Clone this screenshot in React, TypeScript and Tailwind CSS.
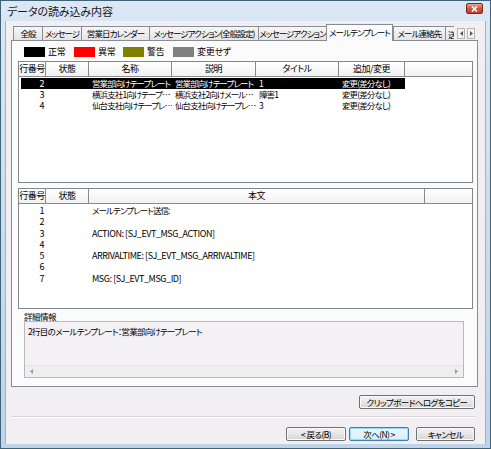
import React from "react";

const FONT = "font-['Noto_Sans_CJK_JP',sans-serif] [font-feature-settings:'palt']";

function Tab({ label, w, selected }: { label: string; w: number; selected?: boolean }) {
  if (selected) {
    return (
      <div
        className="relative z-10 h-[17px] shrink-0 border border-b-0 border-[#898c95] bg-[#fbfbfc] flex items-center justify-center whitespace-nowrap overflow-hidden text-[8.5px] tracking-[-0.9px] text-black pb-[2px]"
        style={{ width: w }}
      >
        {label}
      </div>
    );
  }
  return (
    <div
      className="h-[14px] mb-[1px] shrink-0 border-t border-l border-[#898c95] bg-gradient-to-b from-[#f7f7f7] to-[#e4e4e6] flex items-center justify-center whitespace-nowrap overflow-hidden text-[8.5px] tracking-[-0.9px] text-black"
      style={{ width: w }}
    >
      {label}
    </div>
  );
}

function HeaderCell({ label, w, last }: { label: string; w: number; last?: boolean }) {
  return (
    <div
      className={
        "h-full shrink-0 flex items-center justify-center text-[9px] tracking-[-0.5px] whitespace-nowrap overflow-hidden " +
        (last ? "" : "border-r border-[#8a8a8a]")
      }
      style={{ width: w }}
    >
      {label}
    </div>
  );
}

const upperCols = [27, 43, 83, 84, 83, 66, 67];
const lowerCols = [27, 43, 336, 47];

const upperRows = [
  { n: "2", name: "営業部向けテープレート", desc: "営業部向けテープレート", title: "1", mod: "変更(差分なし)", sel: true },
  { n: "3", name: "横浜支社1向けテープ…", desc: "横浜支社2向けメール…", title: "障害1", mod: "変更(差分なし)" },
  { n: "4", name: "仙台支社向けテープレ…", desc: "仙台支社向けテープレ…", title: "3", mod: "変更(差分なし)" },
];

const lowerRows = [
  { n: "1", t: "メールテンプレート送信:", jp: true },
  { n: "2", t: "" },
  { n: "3", t: "ACTION: [SJ_EVT_MSG_ACTION]" },
  { n: "4", t: "" },
  { n: "5", t: "ARRIVALTIME: [SJ_EVT_MSG_ARRIVALTIME]" },
  { n: "6", t: "" },
  { n: "7", t: "MSG: [SJ_EVT_MSG_ID]" },
];

function Btn({ label, w, def }: { label: string; w: number; def?: boolean }) {
  return (
    <div
      className={
        "h-[14px] shrink-0 rounded-[2px] border flex items-center justify-center text-[8.5px] tracking-[-0.6px] whitespace-nowrap " +
        (def
          ? "border-[#3c7fb1] bg-gradient-to-b from-[#eaf6fd] to-[#d9f0fc] shadow-[inset_0_0_0_1px_#9ed8f7]"
          : "border-[#707070] bg-gradient-to-b from-[#f2f2f2] via-[#e6e6e6] to-[#d4d4d4] shadow-[inset_0_0_0_1px_#fcfcfc]")
      }
      style={{ width: w }}
    >
      {label}
    </div>
  );
}

function LegendItem({ color, label, gap }: { color: string; label: string; gap: number }) {
  return (
    <div className="flex items-center shrink-0" style={{ width: gap }}>
      <div className="w-[21px] h-[10px] shrink-0" style={{ background: color }} />
      <span className="ml-[3px] text-[9px] tracking-[-0.3px] leading-[10px]">{label}</span>
    </div>
  );
}

const JP = "text-[8.5px] tracking-[-0.9px]";
const LAT = "text-[9px] tracking-[-0.45px]";

export default function App() {
  return (
    <div
      className={
        FONT +
        " w-[491px] h-[449px] border border-[#3f6478] bg-gradient-to-b from-[#dbe7f4] via-[#cddcee] to-[#bfd3ea] flex flex-col overflow-hidden text-black"
      }
    >
      {/* title bar */}
      <div className="h-[20px] shrink-0 flex items-center pl-[6px] pr-[7px]">
        <span className="text-[11px] tracking-[-0.1px] text-[#1a1a1a] leading-none">データの読み込み内容</span>
        <div className="ml-auto mt-[-5px] w-[17px] h-[11px] rounded-[2px] border border-[#7a2a22] bg-gradient-to-b from-[#e8a593] via-[#d0553f] to-[#c4402b] flex items-center justify-center">
          <svg width="7" height="6" viewBox="0 0 7 6">
            <path d="M1 0.5 L6 5.5 M6 0.5 L1 5.5" stroke="#ffffff" strokeWidth="1.6" />
          </svg>
        </div>
      </div>

      {/* content */}
      <div className="mx-[4px] mb-[4px] flex-1 bg-[#f1eff2] border-l border-r border-[#9fb2c8] flex flex-col pt-[3px] pb-[3px]">
        {/* tab strip */}
        <div className="relative z-10 h-[17px] -mb-px flex items-end ml-[7px]">
          <Tab label="全般" w={29} />
          <Tab label="メッセージ" w={39} />
          <Tab label="営業日カレンダー" w={68} />
          <Tab label="メッセージアクション(全般設定)" w={109} />
          <Tab label="メッセージアクション" w={68} />
          <Tab label="メールテンプレート" w={67} selected />
          <Tab label="メール連絡先" w={52} />
          <div className="h-[14px] mb-[1px] w-[9px] shrink-0 border-t border-l border-[#898c95] bg-gradient-to-b from-[#f7f7f7] to-[#e4e4e6] overflow-hidden text-[8.5px] leading-[14px] pl-[2px] whitespace-nowrap">
            送
          </div>
          <div className="flex ml-[3px] mb-[2px] gap-[2px]">
            <div className="w-[8px] h-[11px] border border-[#b5b5b5] bg-[#f4f4f4] flex items-center justify-center">
              <svg width="3" height="5" viewBox="0 0 3 5">
                <path d="M3 0 L0 2.5 L3 5 Z" fill="#555" />
              </svg>
            </div>
            <div className="w-[8px] h-[11px] border border-[#b5b5b5] bg-[#f4f4f4] flex items-center justify-center">
              <svg width="3" height="5" viewBox="0 0 3 5">
                <path d="M0 0 L3 2.5 L0 5 Z" fill="#555" />
              </svg>
            </div>
          </div>
        </div>

        {/* panel */}
        <div className="ml-[5px] w-[467px] h-[347px] shrink-0 border border-[#898c95] bg-[#fbfbfc] flex flex-col">
          {/* legend */}
          <div className="mt-[6px] ml-[12px] h-[10px] flex items-center">
            <LegendItem color="#000000" label="正常" gap={50} />
            <LegendItem color="#ff0000" label="異常" gap={49} />
            <LegendItem color="#808000" label="警告" gap={50} />
            <LegendItem color="#808080" label="変更せず" gap={60} />
          </div>

          {/* upper table */}
          <div className="mt-[4px] ml-[6px] w-[455px] h-[122px] shrink-0 border border-[#828790] bg-white flex flex-col">
            <div className="h-[15px] shrink-0 flex border-b border-[#8a8a8a] bg-gradient-to-b from-[#ffffff] to-[#f1f1f3]">
              <HeaderCell label="行番号" w={upperCols[0]} />
              <HeaderCell label="状態" w={upperCols[1]} />
              <HeaderCell label="名称" w={upperCols[2]} />
              <HeaderCell label="説明" w={upperCols[3]} />
              <HeaderCell label="タイトル" w={upperCols[4]} />
              <HeaderCell label="追加/変更" w={upperCols[5]} />
              <HeaderCell label="" w={upperCols[6] - 2} last />
            </div>
            <div className="mt-[1px] flex flex-col">
              {upperRows.map((r) => (
                <div key={r.n} className="h-[11px] flex leading-[11px]">
                  <div
                    className={"flex ml-[2px] " + (r.sel ? "bg-black text-white" : "")}
                    style={{ width: 384 }}
                  >
                    <div className={LAT + " shrink-0 text-right pr-[2px]"} style={{ width: upperCols[0] - 2 }}>
                      {r.n}
                    </div>
                    <div className="shrink-0" style={{ width: upperCols[1] }} />
                    <div className={JP + " shrink-0 pl-[3px] whitespace-nowrap overflow-hidden"} style={{ width: upperCols[2] }}>
                      {r.name}
                    </div>
                    <div className={JP + " shrink-0 pl-[3px] whitespace-nowrap overflow-hidden"} style={{ width: upperCols[3] }}>
                      {r.desc}
                    </div>
                    <div className={JP + " shrink-0 pl-[3px] whitespace-nowrap overflow-hidden"} style={{ width: upperCols[4] }}>
                      {r.title}
                    </div>
                    <div className={JP + " shrink-0 pl-[3px] whitespace-nowrap overflow-hidden"} style={{ width: upperCols[5] - 1 }}>
                      {r.mod}
                    </div>
                  </div>
                </div>
              ))}
            </div>
          </div>

          {/* lower table */}
          <div className="mt-[5px] ml-[6px] w-[455px] h-[121px] shrink-0 border border-[#828790] bg-white flex flex-col">
            <div className="h-[15px] shrink-0 flex border-b border-[#8a8a8a] bg-gradient-to-b from-[#ffffff] to-[#f1f1f3]">
              <HeaderCell label="行番号" w={lowerCols[0]} />
              <HeaderCell label="状態" w={lowerCols[1]} />
              <HeaderCell label="本文" w={lowerCols[2]} />
              <HeaderCell label="" w={lowerCols[3] - 2} last />
            </div>
            <div className="mt-[1px] flex flex-col">
              {lowerRows.map((r) => (
                <div key={r.n} className="h-[11.3px] flex leading-[11px]">
                  <div className={LAT + " shrink-0 text-right pr-[2px]"} style={{ width: lowerCols[0] }}>
                    {r.n}
                  </div>
                  <div className="shrink-0" style={{ width: lowerCols[1] }} />
                  <div
                    className={(r.jp ? JP : LAT) + " shrink-0 pl-[3px] whitespace-nowrap overflow-hidden"}
                    style={{ width: lowerCols[2] }}
                  >
                    {r.t}
                  </div>
                </div>
              ))}
            </div>
          </div>

          {/* details */}
          <div className="mt-[2px] ml-[12px] h-[10px] text-[8.5px] leading-[10px] tracking-[-0.5px]">詳細情報</div>
          <div className="ml-[12px] w-[440px] h-[57px] shrink-0 border border-[#b7b9bf] bg-[#f3f1f4] flex flex-col">
            <div className="flex-1 pl-[3px] pt-[4px] text-[8.5px] leading-[11px] tracking-[-0.7px]">
              2行目のメールテンプレート：営業部向けテープレート
            </div>
            <div className="h-[12px] shrink-0 flex items-center justify-between px-[5px] bg-[#eeedf0] border-t border-[#e6e4e8]">
              <svg width="3" height="5" viewBox="0 0 3 5">
                <path d="M3 0 L0 2.5 L3 5 Z" fill="#9a9a9a" />
              </svg>
              <svg width="3" height="5" viewBox="0 0 3 5">
                <path d="M0 0 L3 2.5 L0 5 Z" fill="#9a9a9a" />
              </svg>
            </div>
          </div>
        </div>

        {/* clipboard button */}
        <div className="mt-[8px] flex justify-end pr-[10px]">
          <Btn label="クリップボードへログをコピー" w={116} />
        </div>

        {/* separator */}
        <div className="mt-[7px] ml-[5px] mr-[10px] h-[2px] border-t border-[#d5d3d6] border-b border-b-white" />

        {/* nav buttons */}
        <div className="mt-[9px] flex justify-end pr-[10px]">
          <Btn label="< 戻る(B)" w={60} />
          <div className="w-[3px]" />
          <Btn label="次へ(N) >" w={60} def />
          <div className="w-[7px]" />
          <Btn label="キャンセル" w={59} />
        </div>
      </div>
    </div>
  );
}
